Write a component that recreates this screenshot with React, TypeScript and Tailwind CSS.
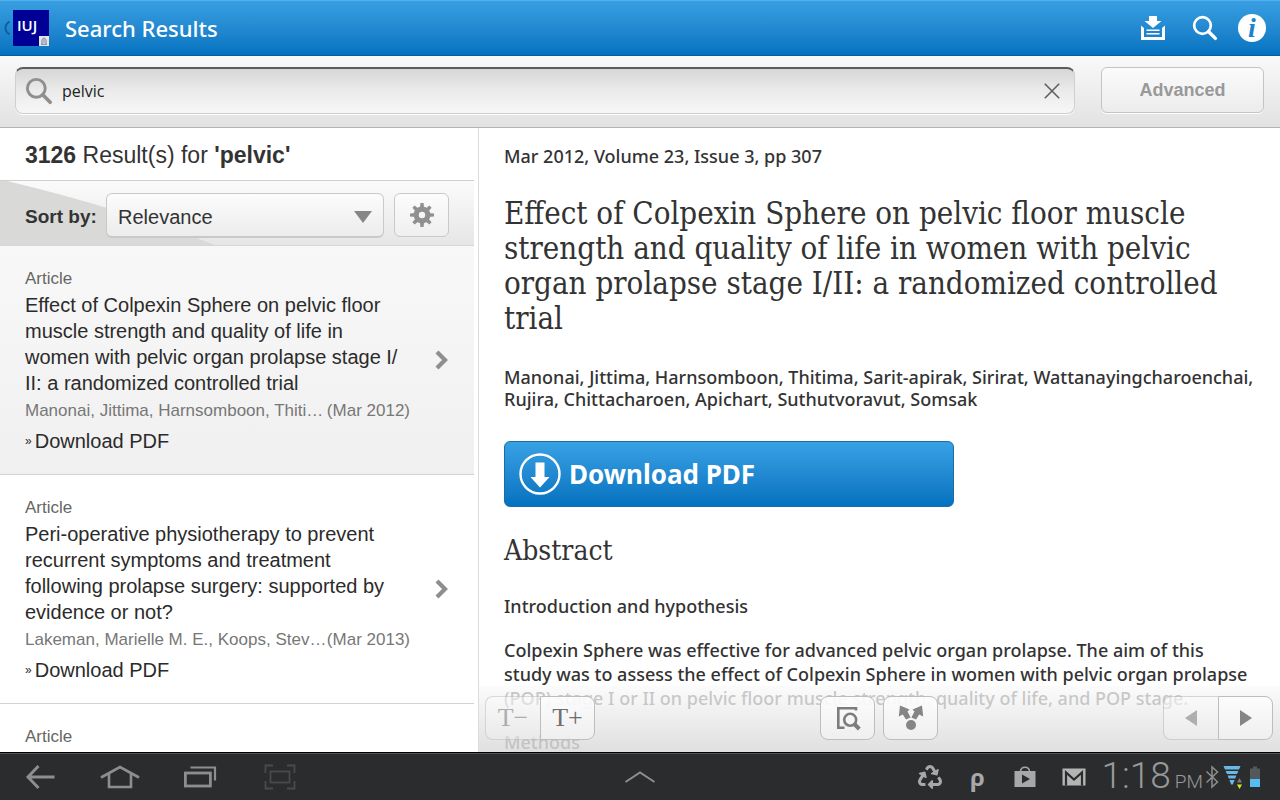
import type { ReactNode } from "react";
import { FaRecycle } from "react-icons/fa";

type Result = { title: ReactNode; authors: string; date: string; selected?: boolean };

const results: Result[] = [
  {
    title: (
      <>
        Effect of Colpexin Sphere on pelvic floor
        <br />
        muscle strength and quality of life in
        <br />
        women with pelvic organ prolapse stage I/
        <br />
        II: a randomized controlled trial
      </>
    ),
    authors: "Manonai, Jittima, Harnsomboon, Thiti…",
    date: "(Mar 2012)",
    selected: true,
  },
  {
    title: (
      <>
        Peri-operative physiotherapy to prevent
        <br />
        recurrent symptoms and treatment
        <br />
        following prolapse surgery: supported by
        <br />
        evidence or not?
      </>
    ),
    authors: "Lakeman, Marielle M. E., Koops, Stev…",
    date: "(Mar 2013)",
  },
];

function SearchIcon({ className }: { className: string }) {
  return (
    <svg viewBox="0 0 26 26" className={className} fill="none" stroke="currentColor" aria-hidden="true">
      <circle cx="10.5" cy="10.5" r="8.3" strokeWidth="2.7" />
      <path d="M16.500 16.500 L23.400 23.400" strokeWidth="3.4" strokeLinecap="round" />
    </svg>
  );
}

function GearIcon() {
  return (
    <svg viewBox="0 0 26 26" className="size-[26px]" fill="#909090" aria-hidden="true">
      {[0, 45, 90, 135, 180, 225, 270, 315].map((a) => (
        <path key={a} d="M10.900 7 L11.400 1 H14.600 L15.100 7 Z" transform={`rotate(${a} 13 13)`} />
      ))}
      <circle cx="13" cy="13" r="5.8" fill="none" stroke="#909090" strokeWidth="5.2" />
    </svg>
  );
}

function Header() {
  return (
    <header className="flex h-14 shrink-0 items-center border-t border-b border-t-[#4fb0ee] border-b-[#0a5c9c] bg-linear-to-b from-[#399fe2] to-[#0273c0] pr-[14px] text-white">
      <button type="button" aria-label="Back" className="flex items-center">
        <svg viewBox="0 0 13 20" className="h-5 w-[13px]" fill="none" stroke="#0d5f9f" strokeWidth="2" aria-hidden="true">
          <path d="M9.500 3.500 Q5.500 6 5.500 10 Q5.500 14 9.500 16.500" />
        </svg>
        <span className="relative block size-9 bg-[#000096] pt-1 pl-1 text-left text-[15px] leading-[22px] font-semibold">
          IUJ
          <svg viewBox="0 0 10 10" className="absolute right-0 bottom-0 size-[10px]" aria-hidden="true">
            <rect width="10" height="10" fill="#e4e6ee" />
            <path d="M3 8 V3.500 L5 1.800 L7 3.500 V8 M4.200 4 H6 M4.200 6 H6 M2 8.300 H8" fill="none" stroke="#6d7490" strokeWidth="0.900" />
          </svg>
        </span>
      </button>
      <h1 className="ml-4 flex-1 font-['Noto_Sans',sans-serif] text-[22px] leading-8 font-medium">Search Results</h1>
      <div className="flex items-center">
        <button type="button" aria-label="Downloads" className="flex size-7 items-center justify-center">
          <svg viewBox="0 0 26 26" className="size-[26px]" fill="currentColor" aria-hidden="true">
            <path d="M9 1 H17 V6 H21.500 L13 13 L4.500 6 H9 Z" />
            <path d="M1 10.500 L4 13 V22 H22 V13 L25 10.500 V25 H1 Z" />
            <path d="M6.500 14.500 H19.500 V16 H6.500 Z M6.500 18 H19.500 V19.500 H6.500 Z" />
          </svg>
        </button>
        <button type="button" aria-label="Search" className="ml-6 flex size-7 items-center justify-center">
          <SearchIcon className="size-[26px]" />
        </button>
        <button
          type="button"
          aria-label="About"
          className="ml-[19px] flex size-7 items-center justify-center rounded-full bg-white font-['Liberation_Serif',serif] text-[28px] leading-7 font-bold text-[#1c83cc] italic"
        >
          i
        </button>
      </div>
    </header>
  );
}

function SearchBar() {
  return (
    <form
      className="flex h-[72px] shrink-0 items-start gap-[26px] border-b border-[#b4b4b4] bg-linear-to-b from-[#f9f9f9] to-[#e2e2e2] px-4 pt-[11px]"
      onSubmit={(e) => e.preventDefault()}
    >
      <label className="-ml-px flex h-[47px] flex-1 items-center rounded-lg border border-t-2 border-[#cfcfcf] border-t-[#5c5c5c] bg-linear-to-b from-[#d6d6d6] via-[#ebebeb] to-[#f7f7f7] pr-2 pl-[9px] shadow-[0_1px_0_#fff]">
        <SearchIcon className="size-7 text-[#8f8f8f]" />
        <input
          aria-label="Search term"
          defaultValue="pelvic"
          className="ml-[9px] min-w-0 flex-1 bg-transparent text-[16px] leading-6 text-[#222] outline-none"
        />
        <button type="button" aria-label="Clear search" className="flex size-7 items-center justify-center">
          <svg viewBox="0 0 16 16" className="size-4" stroke="#5f5f5f" strokeWidth="1.600" aria-hidden="true">
            <path d="M0.800 0.800 L15.200 15.200 M15.200 0.800 L0.800 15.200" />
          </svg>
        </button>
      </label>
      <button
        type="submit"
        className="h-[46px] w-[163px] rounded-md border border-[#c4c4c4] bg-linear-to-b from-[#fbfbfb] to-[#ececec] font-['Liberation_Sans',sans-serif] text-[18px] font-bold text-[#999] shadow-[0_1px_0_#fff]"
      >
        Advanced
      </button>
    </form>
  );
}

function ResultItem({ title, authors, date, selected }: Result) {
  return (
    <li
      className={
        selected
          ? "flex items-center border-b border-[#d2d2d2] bg-linear-to-b from-[#f8f8f8] to-[#f0f0f0] px-[25px]"
          : "flex items-center border-b border-[#d2d2d2] bg-white px-[25px]"
      }
    >
      <div className="w-[385px] pt-[23px] pb-[23px]">
        <p className="text-[17px] leading-5 text-[#666]">Article</p>
        <h3 className="mt-[3px] text-[20px] leading-[26px] whitespace-nowrap text-[#2b2b2b]">{title}</h3>
        <p className="mt-[5px] flex justify-between text-[17px] leading-5 whitespace-nowrap text-[#777]">
          <span>{authors}</span>
          <span>{date}</span>
        </p>
        <a href="#pdf" className="mt-[10px] flex items-center gap-[3px] text-[20px] leading-5 text-[#2b2b2b]">
          <span className="text-[12px]">»</span>
          Download PDF
        </a>
      </div>
      <svg viewBox="0 0 14 20" className="ml-auto h-5 w-[14px]" fill="none" stroke="#8e8e8e" strokeWidth="4.200" aria-hidden="true">
        <path d="M2 2 L10 10 L2 18" />
      </svg>
    </li>
  );
}

function ResultsPane() {
  return (
    <aside className="flex min-h-0 flex-col overflow-hidden border-r border-[#dcdcdc] bg-white pr-1 font-['Liberation_Sans',Arial,sans-serif]">
      <h2 className="h-[53px] shrink-0 border-b border-[#cfcfcf] pt-3 pl-[25px] text-[23px] leading-[30px] text-[#333]">
        <b>3126</b> Result(s) for <b>'pelvic'</b>
      </h2>
      <div className="relative flex h-[65px] shrink-0 items-center border-b border-[#d6d6d6] bg-linear-to-b from-[#fbfbfb] to-[#e6e6e6] pt-1 pr-[25px] pl-[25px]">
        <svg viewBox="0 0 215 64" className="absolute top-0 left-0 h-full w-[215px]" aria-hidden="true">
          <path d="M0 0 H7 Q120 27 215 64 H0 Z" fill="#d9d9d8" />
        </svg>
        <label htmlFor="sort" className="relative w-[81px] pt-1 text-[19px] leading-6 font-bold whitespace-nowrap text-[#333]">
          Sort by:
        </label>
        <div className="relative h-[45px] flex-1">
          <select
            id="sort"
            className="size-full appearance-none rounded-md border border-b-2 border-[#c9c9c9] bg-linear-to-b from-[#fcfcfc] to-[#ececec] pt-1 pl-[11px] text-[20px] text-[#333]"
          >
            <option>Relevance</option>
          </select>
          <svg viewBox="0 0 18 12" className="pointer-events-none absolute top-[18px] right-3 h-3 w-[18px]" aria-hidden="true">
            <path d="M0 0 H18 L9 12 Z" fill="#868686" />
          </svg>
        </div>
        <button
          type="button"
          aria-label="Filter settings"
          className="relative ml-[10px] flex h-11 w-[55px] items-center justify-center rounded-md border border-[#c9c9c9] bg-linear-to-b from-[#fcfcfc] to-[#efefef]"
        >
          <GearIcon />
        </button>
      </div>
      <ul className="min-h-0 flex-1 overflow-hidden">
        {results.map((r) => (
          <ResultItem key={r.authors} {...r} />
        ))}
        <li className="pt-[23px] pl-[25px] text-[17px] leading-5 text-[#666]">Article</li>
      </ul>
    </aside>
  );
}

const toolButton =
  "flex h-11 w-[55px] items-center justify-center border border-[#bdbdbd] bg-linear-to-b from-[#fdfdfd]/90 to-[#f0f0f0]/90 font-['Liberation_Serif',serif] text-[26px] leading-none text-[#6e6e6e]";

function ReaderToolbar() {
  return (
    <div className="absolute inset-x-0 bottom-0 flex h-[66px] justify-between bg-linear-to-b from-[#fafafa]/75 to-[#dadada]/85 pt-[10px] pr-[7px] pl-[6px]">
      <div className="flex">
        <button type="button" aria-label="Decrease text size" className={`${toolButton} rounded-l-lg border-r-0 opacity-50`}>
          T−
        </button>
        <button type="button" aria-label="Increase text size" className={`${toolButton} rounded-r-lg`}>
          T+
        </button>
      </div>
      <div className="flex gap-2">
        <button type="button" aria-label="Find in article" className={`${toolButton} rounded-lg`}>
          <svg viewBox="0 0 26 26" className="size-[26px]" fill="none" stroke="#7c7c7c" strokeWidth="2.600" aria-hidden="true">
            <path d="M21 5.500 V3.300 H3.300 V22.700 H9.500" />
            <circle cx="15.200" cy="14.800" r="6" />
            <path d="M19.300 19 L24.300 24" strokeWidth="4" />
          </svg>
        </button>
        <button type="button" aria-label="Share" className={`${toolButton} rounded-lg`}>
          <svg viewBox="0 0 26 26" className="size-[26px]" fill="#858585" aria-hidden="true">
            <circle cx="13" cy="20" r="5" />
            <path d="M2 0.500 L11.500 4.500 L9.500 6.500 L12.600 12.500 L8 14.500 L4.800 9.500 L0.800 11.500 Z" />
            <path d="M24 0.500 L14.500 4.500 L16.500 6.500 L13.400 12.500 L18 14.500 L21.200 9.500 L25.200 11.500 Z" />
          </svg>
        </button>
      </div>
      <div className="flex">
        <button type="button" aria-label="Previous article" className={`${toolButton} rounded-l-lg border-r-0 opacity-60`}>
          <svg viewBox="0 0 12 16" className="h-4 w-3" aria-hidden="true">
            <path d="M12 0 V16 L0 8 Z" fill="#858585" />
          </svg>
        </button>
        <button type="button" aria-label="Next article" className={`${toolButton} rounded-r-lg`}>
          <svg viewBox="0 0 12 16" className="h-4 w-3" aria-hidden="true">
            <path d="M0 0 V16 L12 8 Z" fill="#858585" />
          </svg>
        </button>
      </div>
    </div>
  );
}

function ArticlePane() {
  return (
    <main className="relative min-h-0 overflow-hidden bg-white">
      <article className="pt-4 pr-5 pl-[25px] font-['Noto_Sans',sans-serif] text-[18px] leading-6 font-medium whitespace-nowrap text-[#333]">
        <p>Mar 2012, Volume 23, Issue 3, pp 307</p>
        <h2 className="mt-7 font-['DejaVu_Serif_Condensed','DejaVu_Serif',serif] text-[31px] leading-[35px] font-normal">
          Effect of Colpexin Sphere on pelvic floor muscle
          <br />
          strength and quality of life in women with pelvic
          <br />
          organ prolapse stage I/II: a randomized controlled
          <br />
          trial
        </h2>
        <p className="mt-[30px] leading-[22px]">
          Manonai, Jittima, Harnsomboon, Thitima, Sarit-apirak, Sirirat, Wattanayingcharoenchai,
          <br />
          Rujira, Chittacharoen, Apichart, Suthutvoravut, Somsak
        </p>
        <a
          href="#pdf"
          className="mt-[31px] flex h-[66px] w-[450px] items-center rounded-md border border-[#1a6ea8] bg-linear-to-b from-[#38a1e4] to-[#0272bf] pl-[14px] text-[26px] font-bold text-white"
        >
          <svg viewBox="0 0 42 42" className="size-[42px]" aria-hidden="true">
            <circle cx="21" cy="21" r="19.500" fill="none" stroke="#fff" strokeWidth="2.400" />
            <path d="M16.500 9.500 H25.500 V24 H30.500 L21 34.500 L11.500 24 H16.500 Z" fill="#fff" />
          </svg>
          <span className="ml-2">Download PDF</span>
        </a>
        <h3 className="mt-7 font-['DejaVu_Serif_Condensed','DejaVu_Serif',serif] text-[28px] leading-8 font-normal">Abstract</h3>
        <h4 className="mt-[27px]">Introduction and hypothesis</h4>
        <p className="mt-5">
          Colpexin Sphere was effective for advanced pelvic organ prolapse. The aim of this
          <br />
          study was to assess the effect of Colpexin Sphere in women with pelvic organ prolapse
          <br />
          (POP) stage I or II on pelvic floor muscle strength, quality of life, and POP stage.
        </p>
        <h4 className="mt-5">Methods</h4>
      </article>
      <ReaderToolbar />
    </main>
  );
}

const navButton = "flex h-full w-20 items-center justify-center";

function SystemBar() {
  return (
    <footer className="grid h-12 shrink-0 grid-cols-[1fr_auto_1fr] grid-rows-[minmax(0,1fr)] items-center border-t border-black bg-[#2b2c2e] text-[#a8a8a8] shadow-[inset_0_1px_0_#555]">
      <nav className="flex h-full items-center text-[#8e8e8e]">
        <button type="button" aria-label="Back" className={navButton}>
          <svg viewBox="0 0 30 26" className="h-[26px] w-[30px]" fill="none" stroke="currentColor" strokeWidth="3" aria-hidden="true">
            <path d="M13.500 2 L3 13 L13.500 24 M3 13 H29.500" />
          </svg>
        </button>
        <button type="button" aria-label="Home" className={navButton}>
          <svg viewBox="0 0 40 26" className="h-[26px] w-10" fill="none" stroke="currentColor" strokeWidth="2.600" aria-hidden="true">
            <path d="M1 13.500 L20 3 L39 13.500" />
            <path d="M9 9.500 V23 H31 V9.500" />
          </svg>
        </button>
        <button type="button" aria-label="Recent apps" className={navButton}>
          <svg viewBox="0 0 34 24" className="h-6 w-[34px]" fill="none" stroke="currentColor" strokeWidth="2.800" aria-hidden="true">
            <rect x="2.400" y="8" width="25" height="13" />
            <path d="M7.500 2.500 H32 V15.500" strokeWidth="2.200" />
          </svg>
        </button>
        <button type="button" aria-label="Screenshot" className={`${navButton} text-[#4a4a4a]`}>
          <svg viewBox="0 0 32 26" className="h-[26px] w-8" fill="none" stroke="currentColor" strokeWidth="1.800" aria-hidden="true">
            <path d="M9 1.500 H1.500 V9 M1.500 17 V24.500 H9 M23 1.500 H30.500 V9 M30.500 17 V24.500 H23" />
            <rect x="6.500" y="7.500" width="19" height="11" />
          </svg>
        </button>
      </nav>
      <button type="button" aria-label="Open tray" className="flex items-center justify-center">
        <svg viewBox="0 0 32 14" className="h-[14px] w-8" fill="none" stroke="#8e8e8e" strokeWidth="2" aria-hidden="true">
          <path d="M1.500 12 L16 2.500 L30.500 12" />
        </svg>
      </button>
      <div className="flex items-center justify-end pr-5">
        <FaRecycle className="size-6" aria-hidden="true" />
        <span className="ml-7 w-4 text-center font-['Noto_Sans',sans-serif] text-[24px] leading-6 font-bold">ρ</span>
        <svg viewBox="0 0 22 22" className="ml-7 size-[22px]" aria-hidden="true">
          <path d="M6.500 6 Q6.500 1.200 11 1.200 Q15.500 1.200 15.500 6" fill="none" stroke="currentColor" strokeWidth="1.500" />
          <path d="M0.500 5 H21.500 V21 H0.500 Z M8 8.500 V17.500 L16 13 Z" fill="currentColor" fillRule="evenodd" />
        </svg>
        <svg viewBox="0 0 24 18" className="ml-[26px] h-[18px] w-6" aria-hidden="true">
          <rect x="0.500" y="0.500" width="23" height="17" fill="#b4b4b4" />
          <path d="M4 17.500 V4.500 L12 11.500 L20 4.500 V17.500" fill="none" stroke="#2b2c2e" strokeWidth="2.200" />
        </svg>
        <time className="ml-4 flex items-baseline pt-1 font-['Roboto',sans-serif] leading-10 font-light text-[#999]">
          <span className="text-[37px]">1:18</span>
          <span className="ml-1 text-[19px]">PM</span>
        </time>
        <svg viewBox="0 0 14 24" className="ml-[2px] h-6 w-[14px]" fill="none" stroke="#8e8e8e" strokeWidth="1.500" aria-hidden="true">
          <path d="M1.500 6.500 L12.500 17 L7 22 V2 L12.500 7 L1.500 17.500" />
        </svg>
        <svg viewBox="0 0 20 26" className="ml-1 h-[26px] w-5" aria-hidden="true">
          <path d="M0.500 2 H17.500 L16 5.500 H2 Z M2.600 7 H15.400 L14 10 H4 Z M4.600 11.500 H13.400 L12.200 14.500 H5.800 Z M6.400 16 H11.600 L9.800 20.500 H8.200 Z" fill="#6ab8e6" />
          <path d="M14 18.500 L16.500 14 L19 18.500 Z" fill="#777" />
          <path d="M14 20.500 H19 L16.500 25 Z" fill="#c4ee2e" />
        </svg>
        <svg viewBox="0 0 10 22" className="ml-[7px] h-[22px] w-[10px]" aria-hidden="true">
          <path d="M3 0.500 H7 V2.500 H10 V13 H0 V2.500 H3 Z" fill="#55585b" />
          <rect y="13" width="10" height="8" fill="#55bdf3" />
        </svg>
      </div>
    </footer>
  );
}

export default function App() {
  return (
    <div className="flex h-screen flex-col overflow-hidden bg-white font-['Open_Sans','Noto_Sans',sans-serif]">
      <Header />
      <SearchBar />
      <div className="grid min-h-0 flex-1 grid-cols-[479fr_801fr]">
        <ResultsPane />
        <ArticlePane />
      </div>
      <SystemBar />
    </div>
  );
}
